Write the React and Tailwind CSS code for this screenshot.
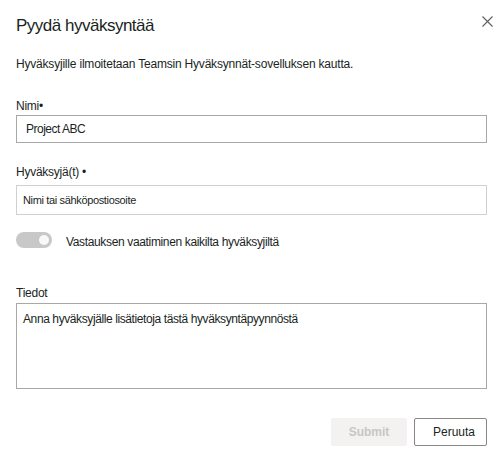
import { useState } from "react";

const label = "block text-[12px] leading-[16px] tracking-[-0.25px] text-[#201f1e]";

const App = () => {
  const [name, setName] = useState("Project ABC");
  const [approvers, setApprovers] = useState("");
  const [details, setDetails] = useState("");

  return (
    <div
      className="h-[455px] w-[500px] bg-white pl-4 pr-[13px] text-[#201f1e]"
      style={{ fontFamily: '"Liberation Sans", Arial, sans-serif' }}
    >
      <div className="flex items-start justify-between pt-[14px]">
        <h1 className="text-[17px] leading-[24px] tracking-[-0.5px] font-normal">Pyydä hyväksyntää</h1>
        <button type="button" aria-label="Sulje" className="-mr-[6px] mt-[1px] flex h-[12px] w-[12px] items-center justify-center text-[#605e5c]">
          <svg width="11" height="11" viewBox="0 0 11 11" fill="none" stroke="currentColor" strokeWidth="1.1">
            <path d="M0.5 0.5 L10.5 10.5 M10.5 0.5 L0.5 10.5" />
          </svg>
        </button>
      </div>

      <p className="mt-[18px] text-[12px] leading-[16px] tracking-[-0.2px]">
        Hyväksyjille ilmoitetaan Teamsin Hyväksynnät-sovelluksen kautta.
      </p>

      <label className={`${label} mt-[26px]`} htmlFor="name">Nimi•</label>
      <input
        id="name"
        className="mt-[1px] block h-[28px] w-full border border-[#a8a8a8] px-[9px] text-[12px] tracking-[-0.5px] outline-none"
        value={name}
        onChange={(e) => setName(e.target.value)}
      />

      <label className={`${label} mt-[21px]`} htmlFor="approvers">Hyväksyjä(t) •</label>
      <input
        id="approvers"
        className="mt-[5px] block h-[30px] w-full border border-[#d0d0d0] px-[6px] text-[11px] tracking-[-0.35px] outline-none placeholder:text-[#201f1e]"
        placeholder="Nimi tai sähköpostiosoite"
        value={approvers}
        onChange={(e) => setApprovers(e.target.value)}
      />

      <div className="mt-[17px] flex h-[16px] items-center gap-[14px]">
        <div className="relative h-[16px] w-[36px] rounded-full bg-[#c8c8c8]">
          <span className="absolute right-[3px] top-[3px] h-[10px] w-[10px] rounded-full bg-[#f8f8f8]" />
        </div>
        <span className="relative top-[2px] text-[12px] leading-[16px] tracking-[-0.35px]">
          Vastauksen vaatiminen kaikilta hyväksyjiltä
        </span>
      </div>

      <label className={`${label} mt-[37px]`} htmlFor="details">Tiedot</label>
      <textarea
        id="details"
        className="mt-[2px] block h-[86px] w-full resize-none border border-[#a8a8a8] px-[6px] pt-[7px] text-[12px] leading-[16px] tracking-[-0.4px] outline-none placeholder:text-[#201f1e]"
        placeholder="Anna hyväksyjälle lisätietoja tästä hyväksyntäpyynnöstä"
        value={details}
        onChange={(e) => setDetails(e.target.value)}
      />

      <div className="mt-[29px] flex justify-end gap-[7px]">
        <button
          type="button"
          disabled
          className="h-[28px] w-[76px] rounded-[2px] bg-[#f3f2f1] text-[12px] font-bold text-[#c8c6c4]"
        >
          Submit
        </button>
        <button
          type="button"
          className="h-[28px] w-[73px] rounded-[2px] border border-[#8a8886] bg-white pl-[7px] text-[12px] text-[#201f1e]"
        >
          Peruuta
        </button>
      </div>
    </div>
  );
};

export default App;
